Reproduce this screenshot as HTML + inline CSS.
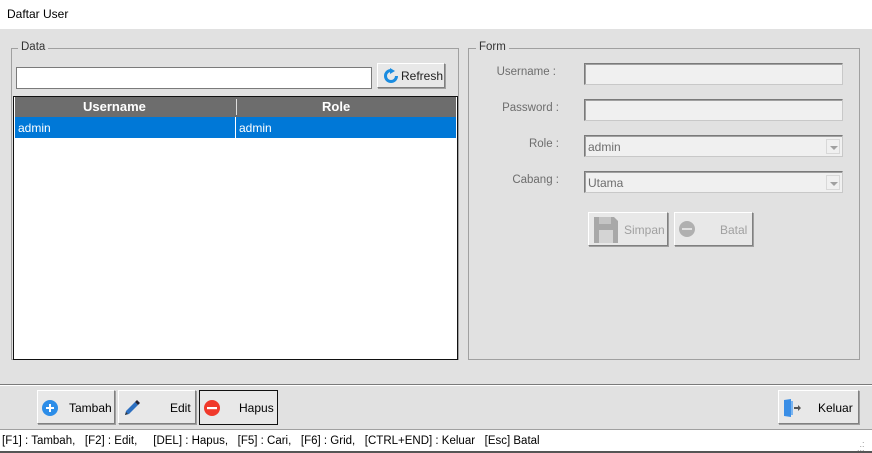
<!DOCTYPE html><html><head><style>
*{box-sizing:border-box;margin:0;padding:0}
body{width:872px;height:453px;background:#e1e1e1;font-family:"Liberation Sans",sans-serif;font-size:12px;color:#000;position:relative;overflow:hidden}
.a{position:absolute}
.grp{position:absolute;border:1px solid #a0a0a0}
.lg{position:absolute;top:-8px;background:#e1e1e1;padding:0 3px;color:#333;font-size:11.5px}
.btn{position:absolute;background:#e8e8e8;border:1px solid;border-color:#fff #808080 #808080 #fff;box-shadow:1px 1px 0 #a0a0a0;font-size:12px}
.inp{position:absolute;background:#f0f0f0;border:1px solid #7a7a7a;border-right-color:#c8c8c8;border-bottom-color:#c8c8c8;box-shadow:inset 1px 1px 0 #a0a0a0}
.lbl{position:absolute;color:#6d6d6d;font-size:11.5px;text-align:right;width:100px}
.dd{position:absolute;right:2px;top:3px;width:14px;height:15px;border:1px solid #d8d8d8;background:#f0f0f0}
.dd:after{content:"";position:absolute;left:3px;top:6px;border-left:4px solid transparent;border-right:4px solid transparent;border-top:4px solid #a0a0a0}
</style></head><body>
<div class="a" style="left:0;top:0;width:872px;height:29px;background:#fff"></div>
<div class="a" style="left:7px;top:7px;font-size:12px">Daftar User</div>

<div class="grp" style="left:11px;top:48px;width:448px;height:312px"><span class="lg" style="left:6px">Data</span></div>
<div class="a" style="left:16px;top:67px;width:356px;height:22px;background:#fff;border:1px solid #7a7a7a"></div>
<div class="btn" style="left:377px;top:63px;width:68px;height:25px">
<svg class="a" style="left:5px;top:4px" width="16" height="16" viewBox="0 0 16 16"><path d="M8 2.5A5.5 5.5 0 1 0 13.5 8" fill="none" stroke="#1a8ce0" stroke-width="3"/><path d="M7 0l5 3-5 3z" fill="#1a8ce0"/></svg>
<span class="a" style="left:23px;top:5px;color:#222">Refresh</span></div>

<div class="a" style="left:13px;top:96px;width:445px;height:264px;background:#fff;border:1px solid #111"></div>
<div class="a" style="left:15px;top:97px;width:441px;height:20px;background:#6d6d6d;color:#fff;font-weight:bold;font-size:13px">
<span class="a" style="left:68px;top:2px">Username</span><span class="a" style="left:307px;top:2px">Role</span>
<div class="a" style="left:221px;top:2px;width:1px;height:16px;background:#ddd"></div></div>
<div class="a" style="left:15px;top:117px;width:441px;height:21px;background:#0078d7;color:#fff;font-size:12px">
<span class="a" style="left:3px;top:4px">admin</span><span class="a" style="left:224px;top:4px">admin</span>
<div class="a" style="left:220px;top:0;width:1px;height:21px;background:#fff"></div></div>

<div class="grp" style="left:468px;top:48px;width:392px;height:312px"><span class="lg" style="left:7px">Form</span></div>
<div class="lbl" style="left:456px;top:66px">Username :</div>
<div class="lbl" style="left:459px;top:102px">Password :</div>
<div class="lbl" style="left:459px;top:138px">Role :</div>
<div class="lbl" style="left:459px;top:174px">Cabang :</div>
<div class="inp" style="left:584px;top:63px;width:259px;height:22px"></div>
<div class="inp" style="left:584px;top:99px;width:259px;height:22px"></div>
<div class="inp" style="left:584px;top:135px;width:259px;height:22px;color:#6d6d6d"><span class="a" style="left:3px;top:4px">admin</span><div class="dd"></div></div>
<div class="inp" style="left:584px;top:171px;width:259px;height:22px;color:#6d6d6d"><span class="a" style="left:3px;top:4px">Utama</span><div class="dd"></div></div>
<div class="btn" style="left:588px;top:212px;width:80px;height:34px;color:#a0a0a0">
<svg class="a" style="left:5px;top:4px" width="24" height="26" viewBox="0 0 24 26"><path d="M0 0h20l4 4v22H0z" fill="#a8a8a8"/><rect x="5" y="0" width="12" height="7" fill="#c4c4c4"/><rect x="5" y="13" width="14" height="13" fill="#d4d4d4"/></svg>
<span class="a" style="left:35px;top:10px">Simpan</span></div>
<div class="btn" style="left:674px;top:212px;width:79px;height:34px;color:#a0a0a0">
<svg class="a" style="left:4px;top:8px" width="16" height="16"><circle cx="8" cy="8" r="8" fill="#b0b0b0"/><rect x="3" y="7" width="10" height="2" fill="#e0e0e0"/></svg>
<span class="a" style="left:45px;top:10px">Batal</span></div>

<div class="a" style="left:0;top:384px;width:872px;height:2px;background:#7a7a7a;border-bottom:1px solid #fff"></div>
<div class="btn" style="left:37px;top:390px;width:78px;height:34px">
<svg class="a" style="left:4px;top:9px" width="16" height="16"><circle cx="8" cy="8" r="8" fill="#2c8de8"/><path d="M8 4v8M4 8h8" stroke="#fff" stroke-width="2"/></svg>
<span class="a" style="left:31px;top:10px">Tambah</span></div>
<div class="btn" style="left:118px;top:390px;width:78px;height:34px">
<svg class="a" style="left:4px;top:8px" width="18" height="18" viewBox="0 0 18 18"><path d="M2 16l1-4 9-9 3 3-9 9z" fill="#2c6fc0"/><path d="M12 3l2-2 3 3-2 2z" fill="#223"/><path d="M2 16l1-3 2 2z" fill="#333"/></svg>
<span class="a" style="left:51px;top:10px">Edit</span></div>
<div class="btn" style="left:199px;top:390px;width:79px;height:35px;border:1px solid #111;box-shadow:none">
<svg class="a" style="left:4px;top:9px" width="16" height="16"><circle cx="8" cy="8" r="8" fill="#f0392b"/><rect x="3" y="7" width="10" height="2.2" fill="#fff"/></svg>
<span class="a" style="left:39px;top:10px">Hapus</span></div>
<div class="btn" style="left:778px;top:390px;width:81px;height:34px">
<svg class="a" style="left:4px;top:7px" width="20" height="20" viewBox="0 0 20 20"><path d="M1 2l7-1v18l-7-1z" fill="#3a8ee6"/><path d="M8 3h2v14H8z" fill="#7ab4f0"/><path d="M11 9h4V7l3 3-3 3v-2h-4z" fill="#555"/></svg>
<span class="a" style="left:39px;top:10px">Keluar</span></div>

<div class="a" style="left:0;top:429px;width:872px;height:24px;background:#fff;border-top:1px solid #a0a0a0;border-bottom:2px solid #555"></div>
<div class="a" style="left:2px;top:435px;font-size:11.5px;word-spacing:0">[F1] : Tambah,&nbsp;&nbsp; [F2] : Edit,&nbsp;&nbsp;&nbsp;&nbsp; [DEL] : Hapus,&nbsp;&nbsp; [F5] : Cari,&nbsp;&nbsp; [F6] : Grid,&nbsp;&nbsp; [CTRL+END] : Keluar&nbsp;&nbsp; [Esc] Batal</div>
<div class="a" style="left:857px;top:438px;color:#999;font-size:9px;line-height:4px">&nbsp;&nbsp;.<br>&nbsp;..<br>...</div>
</body></html>
